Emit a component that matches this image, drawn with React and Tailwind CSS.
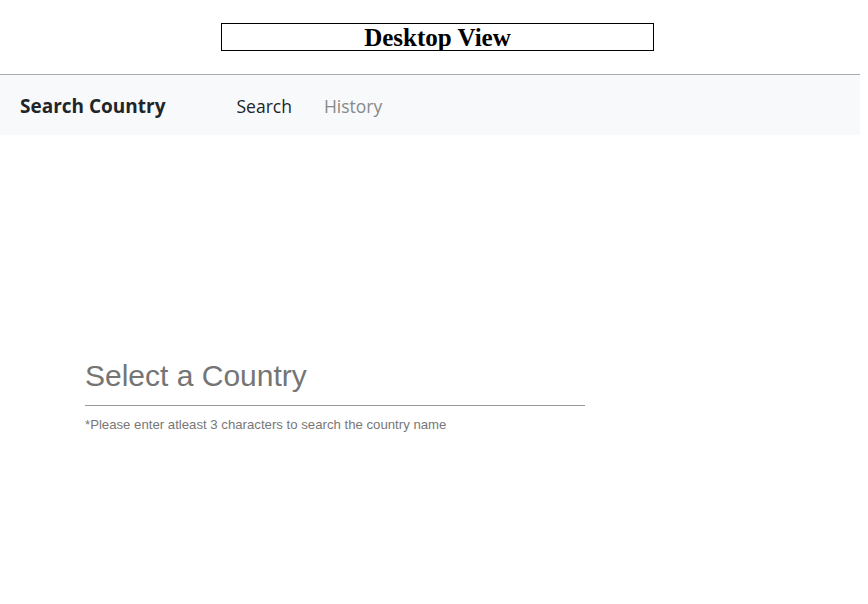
export default function App() {
  return (
    <div className="w-[860px] min-h-[604px] bg-white">
      {/* banner */}
      <div className="flex pl-[221px] pt-[23px] pb-[23px]">
        <div className="w-[433px] h-[28px] border border-black flex items-center justify-center">
          <h1 className="text-[25px] leading-none font-bold text-black pt-[1px]" style={{ fontFamily: '"Liberation Serif", "DejaVu Serif", serif' }}>
            Desktop View
          </h1>
        </div>
      </div>

      {/* navbar */}
      <nav
        className="h-[61px] bg-[#f8f9fa] border-t border-[#aaaaaa] flex items-center px-5 pt-[2px]"
        style={{ fontFamily: '"Open Sans", "Noto Sans", sans-serif' }}
      >
        <span className="text-[19px] font-bold text-[#212529] mr-[71px]">Search Country</span>
        <a className="text-[17.5px] text-[#212529] mr-[32px]">Search</a>
        <a className="text-[17.5px] text-[#888888]">History</a>
      </nav>

      {/* search */}
      <div className="pt-[220px] pl-[85px]" style={{ fontFamily: '"Liberation Sans", Arial, sans-serif' }}>
        <input
          type="text"
          placeholder="Select a Country"
          className="w-[500px] h-[51px] pb-[9px] border-b border-[#999999] text-[30px] text-[#333] placeholder:text-[#757575] outline-none bg-transparent"
        />
        <p className="mt-[9px] text-[13.2px] text-[#777777]">*Please enter atleast 3 characters to search the country name</p>
      </div>
    </div>
  );
}
